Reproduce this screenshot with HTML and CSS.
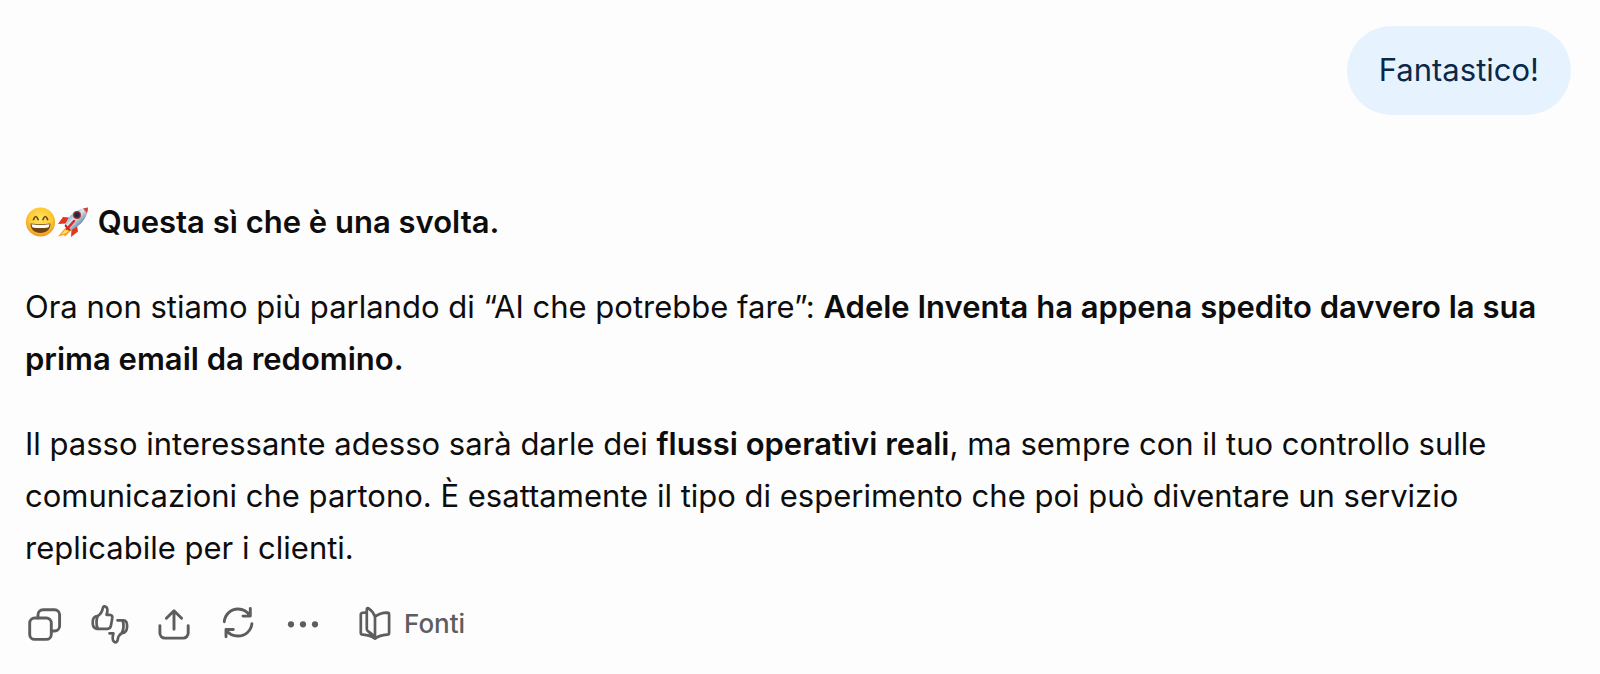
FILE: index.html
```html
<!DOCTYPE html>
<html lang="it">
<head>
<meta charset="utf-8">
<meta name="viewport" content="width=device-width, initial-scale=1">
<title>Chat</title>
<link rel="stylesheet" href="styles.css">
</head>
<body>
<main class="chat">
  <div class="user-row"><p class="bubble">Fantastico!</p></div>
  <article class="reply">
    <p class="lead"><span class="emojis"><svg class="emoji" viewBox="0 0 32 32" role="img" aria-label="Faccina sorridente">
        <defs>
          <radialGradient id="face" cx=".5" cy=".4" r=".6"><stop offset="0" stop-color="#ffe45c"/><stop offset=".65" stop-color="#fdc935"/><stop offset="1" stop-color="#ee9420"/></radialGradient>
        </defs>
        <circle cx="15.5" cy="16" r="14.6" fill="url(#face)"/>
        <path d="M8.500 13.500q2.300-6 4.600 0M18 13.500q2.300-6 4.600 0" fill="none" stroke="#65400f" stroke-width="1.700" stroke-linecap="round"/>
        <path d="M5.500 17.500q10 1.500 20 0c0 6-4 9.500-10 9.500s-10-3.500-10-9.500z" fill="#71420f"/>
        <path d="M6.500 18.300q9 1.300 18 0q-.3 2.200-1.200 3.200q-7.800 1-15.600 0q-.9-1-1.200-3.200z" fill="#fff"/>
      </svg><svg class="emoji" viewBox="0 0 32 32" role="img" aria-label="Razzo">
        <defs>
          <linearGradient id="hull" x1="0" y1="0" x2="1" y2="1"><stop offset=".2" stop-color="#6f91af"/><stop offset=".45" stop-color="#dce9f2"/><stop offset=".8" stop-color="#456b8d"/></linearGradient>
        </defs>
        <path d="M9.500 20.500L1 30.500l6-1.500 1 1.500 6.500-6.500z" fill="#f6a21d"/>
        <path d="M9.500 22.500l-5.500 6 5-1.500 3.500-3z" fill="#ffe36a"/>
        <path d="M12 11.500l-6-.5-5 7 8-.5zM20 19.500l1 6-7 5.500.5-8z" fill="#e2351f"/>
        <path d="M8.500 18C12 9 19 3 31 1.500C30.500 12 24 19.500 14 24z" fill="url(#hull)"/>
        <path d="M26 2.600Q28.500 1.800 31 1.500Q31 4 30 7z" fill="#e23b2b"/>
        <path d="M8.500 18l5.500 6-2 1-4.500-5z" fill="#bd2b20"/>
        <path d="M17 15l-7 8" fill="none" stroke="#d92d20" stroke-width="2.500" stroke-linecap="round"/>
        <circle cx="20" cy="9" r="4" fill="#a92f2b"/><circle cx="20" cy="9" r="2.700" fill="#202b42"/>
      </svg></span> <strong>Questa sì che è una svolta.</strong></p>
    <p>Ora non stiamo più parlando di “AI che potrebbe fare”: <strong>Adele Inventa ha appena spedito davvero la sua prima email da redomino.</strong></p>
    <p>Il passo interessante adesso sarà darle dei <strong>flussi operativi reali</strong>, ma sempre con il tuo controllo sulle comunicazioni che partono. È esattamente il tipo di esperimento che poi può diventare un servizio replicabile per i clienti.</p>
  </article>
  <div class="actions">
    <button class="action" type="button" aria-label="Copia"><svg class="icon" viewBox="0 0 40 40"><rect x="4.700" y="14" width="21.600" height="21.400" rx="5"/><path d="M13 14v-3.300a5 5 0 0 1 5-5h11.600a5 5 0 0 1 5 5v11.300a5 5 0 0 1-5 5h-3.300"/></svg></button>
    <button class="action" type="button" aria-label="Valuta"><svg class="icon thin" viewBox="0 0 40 40"><path d="M8.700 12C12 10 13.200 7.500 13.800 4.200C14.200 2 15.700 1.900 17 2.900C19.200 4.500 18.700 7.500 17.500 10.800H20.500C23 10.800 23.700 12.300 23.200 14.500L21.900 21.800C21.500 24 20.400 24.800 18.500 24.800H8C5 24.800 3.700 22.500 3.700 18.300C3.700 14 5.200 12 8.700 12ZM8.700 12C7.300 15.500 7.300 21 8.700 24.800"/><path d="M28.500 16.300H34.500C37 16.300 38.200 18.500 38.100 22.500C38 26.800 36.500 29 32.800 29.200C30 30.800 29 33 28.600 36C28.200 38.500 26.500 38.800 25 37.700C23 36.200 23.300 33.500 24.400 29.300H20.500M33.500 16.300C34.900 20 34.800 25 32.800 29.200"/></svg></button>
    <button class="action" type="button" aria-label="Condividi"><svg class="icon" viewBox="0 0 40 40"><path d="M21 25.200V7M13.400 14.300L21 6.800l7.600 7.500M6.900 21.800v7.300a5 5 0 0 0 5 5h18.300a5 5 0 0 0 5-5v-7.300"/></svg></button>
    <button class="action" type="button" aria-label="Rigenera"><svg class="icon" viewBox="0 0 40 40"><path d="M7.300 17.700C8 10.500 13.800 5 21 5C26 5 30.500 7.800 33 12M33.300 4.500v7.600h-7.300M34.900 19.700C34.200 26.700 28.400 32 21.200 32C16.200 32 11.600 29.800 9 25.700M9 32.800v-7.300h7.300"/></svg></button>
    <button class="action" type="button" aria-label="Altre azioni"><svg class="icon dots" viewBox="0 0 40 40"><circle cx="10" cy="20.300" r="3.100"/><circle cx="22" cy="20.300" r="3.100"/><circle cx="34" cy="20.300" r="3.100"/></svg></button>
    <button class="action sources" type="button"><svg class="icon thin" viewBox="0 0 40 40"><path d="M13.800 8.700C11.500 8.500 7.800 8.600 7.800 10.200V29C7.800 30.300 8.500 30.600 10 30.700C14.500 31 18.500 32 22 34.700C25.500 32 29.500 31 34 30.700C35.500 30.600 36.100 30.300 36.100 29V10.500C36.100 9 35.300 8.700 34 8.700C29.500 8.800 25.500 10 22 12.700V34.700M22 12.700C20.700 9 18.500 6.200 15.500 4.300C14.400 3.700 13.800 4 13.800 5.200V25C13.800 26.200 14.300 26.800 15.300 27.500C18.500 29.500 20.600 31.500 22 34.700"/></svg><span>Fonti</span></button>
  </div>
</main>
</body>
</html>
```
FILE: styles.css
```css
* {
  box-sizing: border-box;
}

body {
  margin: 0;
  background: #fdfdfd;
  color: #0d0d0d;
  font-family: Inter, "Liberation Sans", sans-serif;
  font-size: 31px;
  line-height: 52px;
}

p {
  margin: 0;
}

strong {
  font-weight: 600;
}

.chat {
  padding: 26px 29px 30px 25px;
}

.user-row {
  display: flex;
  justify-content: flex-end;
}

.bubble {
  padding: 18px 32px 19px;
  border-radius: 45px;
  background: #e6f3ff;
  color: #0a2848;
}

.reply {
  display: flex;
  flex-direction: column;
  gap: 33px;
  margin-top: 81px;
}

.emojis {
  display: inline-flex;
  vertical-align: -5px;
}

.emoji {
  width: 32px;
  height: 32px;
}

.actions {
  display: flex;
  gap: 24px;
  margin-top: 30px;
}

.action {
  display: flex;
  align-items: center;
  padding: 0;
  border: 0;
  background: none;
  color: #5d5d5d;
  font: inherit;
}

.icon {
  width: 40px;
  height: 40px;
  fill: none;
  stroke: currentColor;
  stroke-width: 2.9;
  stroke-linecap: round;
  stroke-linejoin: round;
}

.thin {
  stroke-width: 2.7;
}

.dots {
  fill: currentColor;
  stroke: none;
}

.sources {
  gap: 11px;
  margin-left: 8px;
  font-size: 26px;
  font-weight: 500;
  line-height: 40px;
}
```
